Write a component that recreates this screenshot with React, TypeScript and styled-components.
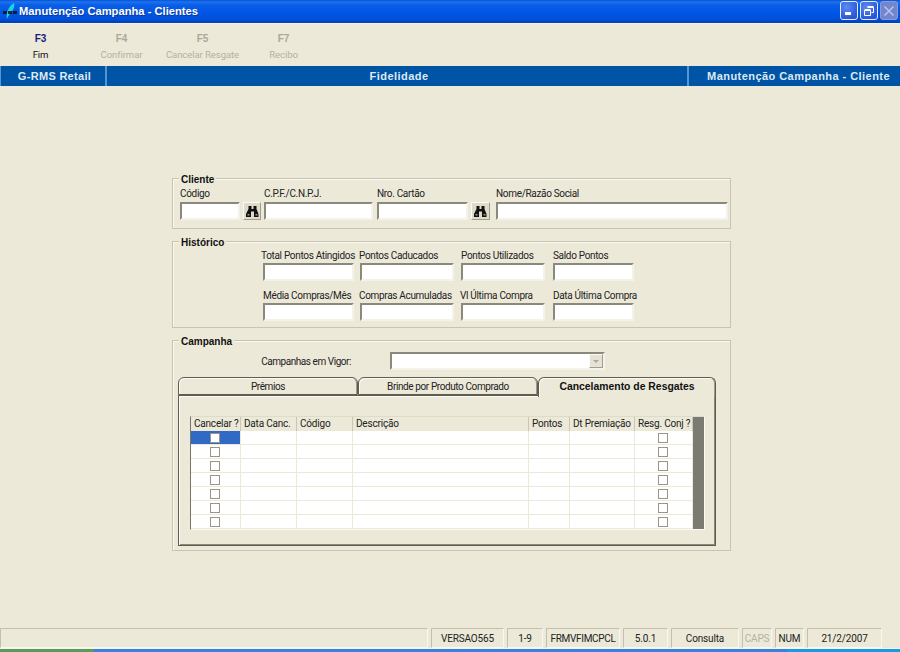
import React from 'react';
import styled, { createGlobalStyle } from 'styled-components';

const Global = createGlobalStyle`
  html, body { margin: 0; padding: 0; height: 100%; overflow: hidden; background: #ece9d8; }
  * { box-sizing: border-box; }
  body { font-family: Roboto, "Liberation Sans", Arial, sans-serif; font-size: 10px; letter-spacing: -0.32px; color: #111; }
`;

const Page = styled.div`
  width: 900px; height: 652px; display: flex; flex-direction: column; background: #ece9d8;
`;

const TitleBar = styled.div`
  height: 24px; flex: none; display: flex; align-items: center; padding: 0 2px 2px 3px;
  border-bottom: 1px solid #f4f3ea; letter-spacing: 0;
  background: linear-gradient(180deg, #0a50d0 0%, #1b74f0 8%, #0a5ee6 22%, #0055e5 55%, #0052dc 80%, #003fb8 100%);
`;
const TitleText = styled.span`
  margin-left: 2px; flex: 1; color: #fff; font: bold 11.2px "Liberation Sans", Arial, sans-serif;
  text-shadow: 1px 1px 0 #0b3aa0;
`;
const WinButton = styled.div<{ $off?: boolean }>`
  width: 18px; height: 19px; margin-left: 2px; border-radius: 3px; display: flex; align-items: center; justify-content: center;
  border: 1px solid ${p => (p.$off ? '#8c9ad8' : '#e4ecfa')};
  background: ${p => (p.$off ? '#7186cf' : 'radial-gradient(circle at 35% 30%, #5c8cf0, #2a56d8 75%)')};
`;

const Toolbar = styled.div`height: 42px; flex: none; display: flex; letter-spacing: -0.1px;`;
const ToolItem = styled.div<{ $off?: boolean }>`
  width: 81px; display: flex; flex-direction: column; align-items: center; padding-top: 9px;
  color: ${p => (p.$off ? '#b4b1a2' : '#111')};
  font-size: 9.6px; line-height: 12px; white-space: nowrap;
`;
const ToolKey = styled.b<{ $off?: boolean }>`
  font: bold 10px/12px "Liberation Sans", Arial, sans-serif; margin-bottom: 4px; color: ${p => (p.$off ? '#aca899' : '#1c1c78')};
`;

const Band = styled.div`
  height: 20px; flex: none; display: flex; background: #0054a6;
  color: #dfe9f3; font: bold 11px/20px "Liberation Sans", Arial, sans-serif; letter-spacing: 0.45px;
`;
const BandLeft = styled.div`
  width: 107px; padding-left: 3px; text-align: center; letter-spacing: 0.3px; border: solid #5a94d0; border-width: 0 2px 0 1px;
`;
const BandMid = styled.div`flex: 1; padding-left: 4px; text-align: center;`;
const BandRight = styled.div`
  width: 213px; padding-right: 10px; text-align: right; border-left: 2px solid #5a94d0;
`;

const Content = styled.main`
  flex: 1; padding: 92px 169px 0 172px; display: flex; flex-direction: column; gap: 12px;
`;
const Group = styled.section<{ $h: number }>`
  position: relative; height: ${p => p.$h}px; border: 1px solid #c7c4b2;
  box-shadow: 1px 1px 0 #f8f7f0 inset;
`;
const Legend = styled.h3`
  position: absolute; top: -5px; left: 6px; margin: 0; padding: 0 2px; background: #ece9d8;
  font: bold 10px/12px "Liberation Sans", Arial, sans-serif; letter-spacing: 0; color: #111;
`;

const ClientRow = styled.div`display: flex; align-items: flex-end; padding: 9px 0 0 7px;`;
const Field = styled.div<{ $w: number; $ml?: number }>`
  width: ${p => p.$w}px; margin-left: ${p => p.$ml ?? 0}px; flex: none;
`;
const Label = styled.label<{ $shift?: number }>`
  display: block; height: 13px; line-height: 12px; white-space: nowrap; color: #222;
  margin-left: ${p => p.$shift ?? 0}px;
`;
const ClientLabel = styled(Label)`height: 14px;`;
const Input = styled.div`
  height: 18px; background: #fff; border: 2px solid; border-color: #8b897b #f4f3ea #f4f3ea #8b897b;
`;
const FindButton = styled.button<{ $ml: number; $w: number }>`
  width: ${p => p.$w}px; height: 18px; margin-left: ${p => p.$ml}px; flex: none; padding: 0;
  display: flex; align-items: center; justify-content: center; background: #dedbcb;
  border: 1px solid; border-color: #fbfaf4 #a09e90 #a09e90 #fbfaf4;
`;

const HistGrid = styled.div`
  display: grid; grid-template-columns: 97px 101px 92px 81px; row-gap: 9px;
  padding: 8px 0 0 90px;
`;

const ComboRow = styled.div`display: flex; align-items: center; padding: 11px 0 0 5px;`;
const ComboLabel = styled.span`width: 173px; text-align: right; color: #222; white-space: nowrap; letter-spacing: -0.45px;`;
const Combo = styled.div`
  width: 215px; height: 18px; margin-left: 39px; display: flex; justify-content: flex-end; background: #fff;
  border: 2px solid; border-color: #8b897b #f4f3ea #f4f3ea #8b897b;
`;
const ComboArrow = styled.div`
  width: 14px; background: #e6e3d4; display: flex; align-items: center; justify-content: center;
  border: 1px solid; border-color: #fbfaf4 #a09e90 #a09e90 #fbfaf4;
`;
const Triangle = styled.i`
  width: 0; height: 0; border: solid transparent; border-width: 3px 3px 0; border-top-color: #aca899;
`;

const TabArea = styled.div`margin: 7px 0 0 5px; width: 538px;`;
const TabStrip = styled.div`display: flex; height: 18px;`;
const Tab = styled.div<{ $w: number; $on?: boolean }>`
  position: relative; width: ${p => p.$w}px; height: ${p => (p.$on ? 20 : 18)}px; z-index: ${p => (p.$on ? 1 : 0)};
  text-align: center; font: ${p => (p.$on ? 'bold 10.4px "Liberation Sans", Arial, sans-serif' : '10px Roboto, sans-serif')};
  letter-spacing: ${p => (p.$on ? 0 : '-0.4px')};
  color: ${p => (p.$on ? '#111' : '#222')}; background: #ece9d8; border: 1px solid #5f5d53;
  border-bottom: ${p => (p.$on ? '0' : '1px solid #5f5d53')}; border-radius: 6px 6px 0 0;
  box-shadow: inset 1px 1px 0 #fbfaf4, inset -1px 0 0 #9c9a8c;
  line-height: 18px; white-space: nowrap;
`;
const Panel = styled.div`
  height: 151px; border: 1px solid #5f5d53; padding: 20px 0 0 11px; background: #ece9d8;
  box-shadow: inset 1px 1px 0 #fbfaf4, inset -1px -1px 0 #8a887b;
`;
const GridWrap = styled.div`
  width: 515px; height: 114px; display: flex; border: 1px solid; border-color: #dedbc9 #fbfaf4 #fbfaf4 #77756a;
`;
const GridBody = styled.div`
  display: grid; grid-template-columns: 50px 56px 56px 176px 41px 65px 58px;
  grid-auto-rows: 14px; background: #fff; border-bottom: 1px solid #55534a; align-content: start;
`;
const Head = styled.div`
  background: #ece9d8; padding-left: 3px; line-height: 14px; color: #222; letter-spacing: -0.2px;
  border-right: 1px solid #c9c6b4; white-space: nowrap; overflow: hidden;
`;
const Cell = styled.div<{ $sel?: boolean }>`
  background: ${p => (p.$sel ? '#316ac5' : '#fff')}; display: flex; align-items: center; justify-content: center;
  border-right: 1px solid #ece9d8; border-bottom: 1px solid #ece9d8;
`;
const Check = styled.span`width: 10px; height: 10px; margin-right: 2px; background: #fff; border: 1px solid #98968a;`;
const ScrollEdge = styled.div`flex: 1; background: #7b7b74;`;

const StatusBar = styled.footer`height: 20px; flex: none; display: flex; gap: 3px; color: #222; letter-spacing: -0.15px;`;
const StatusCell = styled.div<{ $w: number; $off?: boolean; $tight?: boolean }>`
  width: ${p => p.$w}px; flex: none; text-align: center; line-height: 19px; white-space: nowrap;
  letter-spacing: ${p => (p.$tight ? '-0.3px' : 'inherit')};
  border: 1px solid; border-color: #c3c0ae #f8f7f0 #f8f7f0 #c3c0ae; color: ${p => (p.$off ? '#b4b1a2' : '#222')};
`;

const Taskbar = styled.div`height: 4px; flex: none; display: flex; border-top: 1px solid #f4f3ea;`;
const Start = styled.div`width: 94px; background: #5a9a5a;`;
const Tasks = styled.div`flex: 1; background: #3a80e0;`;
const Tray = styled.div`width: 113px; background: #1a9ae4;`;

const Binoculars = () => (
  <svg width="13" height="11" viewBox="0 0 13 11">
    <path fill="#111" d="M2.5 0h3v3h2V0h3v3l2 5v3H8V5.5H5V11H0V8l2.5-5z" />
    <path fill="#9a9a90" d="M1.5 8h2v1.5h-2zM9.5 8h2v1.5h-2z" />
  </svg>
);
const Logo = () => (
  <svg width="14" height="16" viewBox="0 0 14 16">
    <path fill="#19d3e6" d="M11 0c1 2 0 6-2 8-2 3-4 5-5 8-1-4 0-8 2-11 1-2 3-4 5-5z" />
    <path fill="#111" d="M0 8h4v3H0zM5 8h4v3H5zM10 8h4v3h-4z" opacity=".85" />
  </svg>
);

const headers = ['Data Canc.', 'Código', 'Descrição', 'Pontos', 'Dt Premiação'];

export default function App() {
  return (
    <Page>
      <Global />
      <TitleBar>
        <Logo />
        <TitleText>Manutenção Campanha - Clientes</TitleText>
        <WinButton>
          <svg width="10" height="10" viewBox="0 0 10 10"><rect x="1" y="6" width="6" height="3" fill="#fff" /></svg>
        </WinButton>
        <WinButton>
          <svg width="12" height="12" viewBox="0 0 12 12" fill="none" stroke="#fff"><path d="M4.5 2.5h6v5h-2M1.5 5.5h6v5h-6z" /><path d="M4.5 1.5h6M1.5 4.5h6" /></svg>
        </WinButton>
        <WinButton $off>
          <svg width="12" height="12" viewBox="0 0 12 12" stroke="#b8c2e8" strokeWidth="1.6"><path d="M1.5 1.5l9 9M10.5 1.5l-9 9" /></svg>
        </WinButton>
      </TitleBar>
      <Toolbar>
        <ToolItem><ToolKey>F3</ToolKey>Fim</ToolItem>
        <ToolItem $off><ToolKey $off>F4</ToolKey>Confirmar</ToolItem>
        <ToolItem $off><ToolKey $off>F5</ToolKey>Cancelar Resgate</ToolItem>
        <ToolItem $off><ToolKey $off>F7</ToolKey>Recibo</ToolItem>
      </Toolbar>
      <Band>
        <BandLeft>G-RMS Retail</BandLeft>
        <BandMid>Fidelidade</BandMid>
        <BandRight>Manutenção Campanha - Cliente</BandRight>
      </Band>
      <Content>
        <Group $h={51}>
          <Legend>Cliente</Legend>
          <ClientRow>
            <Field $w={60}><ClientLabel>Código</ClientLabel><Input /></Field>
            <FindButton $ml={3} $w={18}><Binoculars /></FindButton>
            <Field $w={109} $ml={3}><ClientLabel>C.P.F./C.N.P.J.</ClientLabel><Input /></Field>
            <Field $w={91} $ml={4}><ClientLabel>Nro. Cartão</ClientLabel><Input /></Field>
            <FindButton $ml={3} $w={19}><Binoculars /></FindButton>
            <Field $w={232} $ml={6}><ClientLabel>Nome/Razão Social</ClientLabel><Input /></Field>
          </ClientRow>
        </Group>
        <Group $h={87}>
          <Legend>Histórico</Legend>
          <HistGrid>
            <Field $w={91}><Label $shift={-2}>Total Pontos Atingidos</Label><Input /></Field>
            <Field $w={94}><Label $shift={-1}>Pontos Caducados</Label><Input /></Field>
            <Field $w={84}><Label>Pontos Utilizados</Label><Input /></Field>
            <Field $w={81}><Label>Saldo Pontos</Label><Input /></Field>
            <Field $w={91}><Label>Média Compras/Mês</Label><Input /></Field>
            <Field $w={94}><Label $shift={-1}>Compras Acumuladas</Label><Input /></Field>
            <Field $w={84}><Label $shift={-1}>Vl Última Compra</Label><Input /></Field>
            <Field $w={81}><Label>Data Última Compra</Label><Input /></Field>
          </HistGrid>
        </Group>
        <Group $h={211}>
          <Legend>Campanha</Legend>
          <ComboRow>
            <ComboLabel>Campanhas em Vigor:</ComboLabel>
            <Combo><ComboArrow><Triangle /></ComboArrow></Combo>
          </ComboRow>
          <TabArea>
            <TabStrip>
              <Tab $w={180}>Prêmios</Tab>
              <Tab $w={180}>Brinde por Produto Comprado</Tab>
              <Tab $w={178} $on>Cancelamento de Resgates</Tab>
            </TabStrip>
            <Panel>
              <GridWrap>
                <GridBody>
                  <Head>Cancelar ?</Head>
                  {headers.map(h => <Head key={h}>{h}</Head>)}
                  <Head>Resg. Conj ?</Head>
                  {Array.from({ length: 7 }).map((_, r) => (
                    <React.Fragment key={r}>
                      <Cell $sel={r === 0}><Check /></Cell>
                      {headers.map(h => <Cell key={h} />)}
                      <Cell><Check /></Cell>
                    </React.Fragment>
                  ))}
                </GridBody>
                <ScrollEdge />
              </GridWrap>
            </Panel>
          </TabArea>
        </Group>
      </Content>
      <StatusBar>
        <StatusCell $w={428} />
        <StatusCell $w={73}>VERSAO565</StatusCell>
        <StatusCell $w={36}>1-9</StatusCell>
        <StatusCell $w={74} $tight>FRMVFIMCPCL</StatusCell>
        <StatusCell $w={45}>5.0.1</StatusCell>
        <StatusCell $w={68}>Consulta</StatusCell>
        <StatusCell $w={30} $off>CAPS</StatusCell>
        <StatusCell $w={29}>NUM</StatusCell>
        <StatusCell $w={75}>21/2/2007</StatusCell>
      </StatusBar>
      <Taskbar><Start /><Tasks /><Tray /></Taskbar>
    </Page>
  );
}
